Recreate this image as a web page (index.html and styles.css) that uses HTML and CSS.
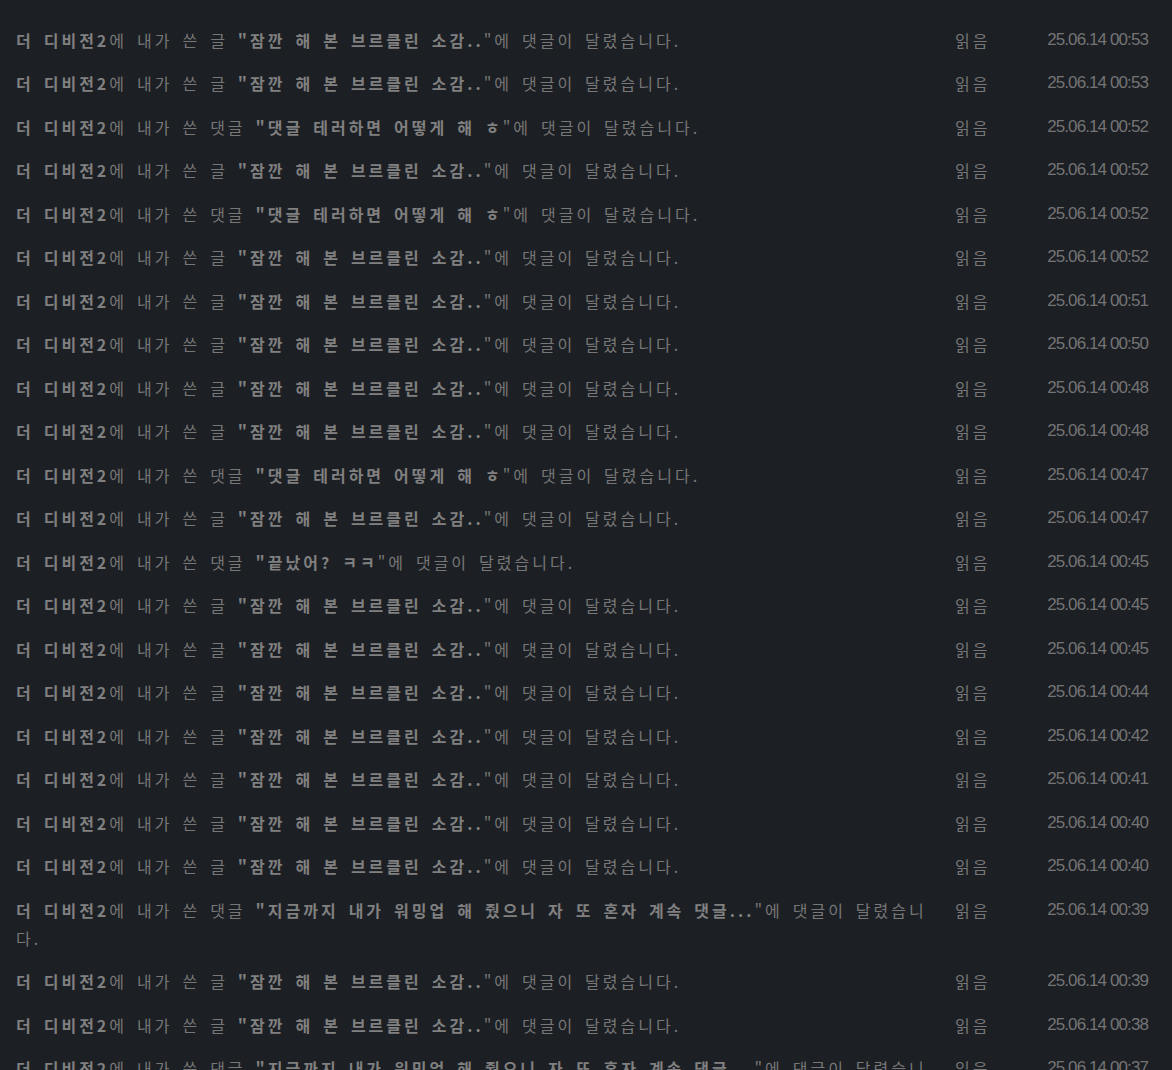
FILE: index.html
```html
<!DOCTYPE html>
<html lang="ko">
<head>
    <meta charset="UTF-8">
    <meta name="viewport" content="width=device-width, initial-scale=1.0">
    <title>알림</title>
    <link rel="stylesheet" href="styles.css">
</head>
<body>
    <ul class="noti-list">
        <li class="noti"><p class="msg"><b>더 디비전2</b>에 내가 쓴 글 <b>"잠깐 해 본 브르클린 소감..</b>"에 댓글이 달렸습니다.</p><span class="state">읽음</span><span class="date">25.06.14 00:53</span></li>
        <li class="noti"><p class="msg"><b>더 디비전2</b>에 내가 쓴 글 <b>"잠깐 해 본 브르클린 소감..</b>"에 댓글이 달렸습니다.</p><span class="state">읽음</span><span class="date">25.06.14 00:53</span></li>
        <li class="noti"><p class="msg"><b>더 디비전2</b>에 내가 쓴 댓글 <b>"댓글 테러하면 어떻게 해 ㅎ</b>"에 댓글이 달렸습니다.</p><span class="state">읽음</span><span class="date">25.06.14 00:52</span></li>
        <li class="noti"><p class="msg"><b>더 디비전2</b>에 내가 쓴 글 <b>"잠깐 해 본 브르클린 소감..</b>"에 댓글이 달렸습니다.</p><span class="state">읽음</span><span class="date">25.06.14 00:52</span></li>
        <li class="noti"><p class="msg"><b>더 디비전2</b>에 내가 쓴 댓글 <b>"댓글 테러하면 어떻게 해 ㅎ</b>"에 댓글이 달렸습니다.</p><span class="state">읽음</span><span class="date">25.06.14 00:52</span></li>
        <li class="noti"><p class="msg"><b>더 디비전2</b>에 내가 쓴 글 <b>"잠깐 해 본 브르클린 소감..</b>"에 댓글이 달렸습니다.</p><span class="state">읽음</span><span class="date">25.06.14 00:52</span></li>
        <li class="noti"><p class="msg"><b>더 디비전2</b>에 내가 쓴 글 <b>"잠깐 해 본 브르클린 소감..</b>"에 댓글이 달렸습니다.</p><span class="state">읽음</span><span class="date">25.06.14 00:51</span></li>
        <li class="noti"><p class="msg"><b>더 디비전2</b>에 내가 쓴 글 <b>"잠깐 해 본 브르클린 소감..</b>"에 댓글이 달렸습니다.</p><span class="state">읽음</span><span class="date">25.06.14 00:50</span></li>
        <li class="noti"><p class="msg"><b>더 디비전2</b>에 내가 쓴 글 <b>"잠깐 해 본 브르클린 소감..</b>"에 댓글이 달렸습니다.</p><span class="state">읽음</span><span class="date">25.06.14 00:48</span></li>
        <li class="noti"><p class="msg"><b>더 디비전2</b>에 내가 쓴 글 <b>"잠깐 해 본 브르클린 소감..</b>"에 댓글이 달렸습니다.</p><span class="state">읽음</span><span class="date">25.06.14 00:48</span></li>
        <li class="noti"><p class="msg"><b>더 디비전2</b>에 내가 쓴 댓글 <b>"댓글 테러하면 어떻게 해 ㅎ</b>"에 댓글이 달렸습니다.</p><span class="state">읽음</span><span class="date">25.06.14 00:47</span></li>
        <li class="noti"><p class="msg"><b>더 디비전2</b>에 내가 쓴 글 <b>"잠깐 해 본 브르클린 소감..</b>"에 댓글이 달렸습니다.</p><span class="state">읽음</span><span class="date">25.06.14 00:47</span></li>
        <li class="noti"><p class="msg"><b>더 디비전2</b>에 내가 쓴 댓글 <b>"끝났어? ㅋㅋ</b>"에 댓글이 달렸습니다.</p><span class="state">읽음</span><span class="date">25.06.14 00:45</span></li>
        <li class="noti"><p class="msg"><b>더 디비전2</b>에 내가 쓴 글 <b>"잠깐 해 본 브르클린 소감..</b>"에 댓글이 달렸습니다.</p><span class="state">읽음</span><span class="date">25.06.14 00:45</span></li>
        <li class="noti"><p class="msg"><b>더 디비전2</b>에 내가 쓴 글 <b>"잠깐 해 본 브르클린 소감..</b>"에 댓글이 달렸습니다.</p><span class="state">읽음</span><span class="date">25.06.14 00:45</span></li>
        <li class="noti"><p class="msg"><b>더 디비전2</b>에 내가 쓴 글 <b>"잠깐 해 본 브르클린 소감..</b>"에 댓글이 달렸습니다.</p><span class="state">읽음</span><span class="date">25.06.14 00:44</span></li>
        <li class="noti"><p class="msg"><b>더 디비전2</b>에 내가 쓴 글 <b>"잠깐 해 본 브르클린 소감..</b>"에 댓글이 달렸습니다.</p><span class="state">읽음</span><span class="date">25.06.14 00:42</span></li>
        <li class="noti"><p class="msg"><b>더 디비전2</b>에 내가 쓴 글 <b>"잠깐 해 본 브르클린 소감..</b>"에 댓글이 달렸습니다.</p><span class="state">읽음</span><span class="date">25.06.14 00:41</span></li>
        <li class="noti"><p class="msg"><b>더 디비전2</b>에 내가 쓴 글 <b>"잠깐 해 본 브르클린 소감..</b>"에 댓글이 달렸습니다.</p><span class="state">읽음</span><span class="date">25.06.14 00:40</span></li>
        <li class="noti"><p class="msg"><b>더 디비전2</b>에 내가 쓴 글 <b>"잠깐 해 본 브르클린 소감..</b>"에 댓글이 달렸습니다.</p><span class="state">읽음</span><span class="date">25.06.14 00:40</span></li>
        <li class="noti"><p class="msg"><b>더 디비전2</b>에 내가 쓴 댓글 <b>"지금까지 내가 워밍업 해 줬으니 자 또 혼자 계속 댓글...</b>"에 댓글이 달렸습니다.</p><span class="state">읽음</span><span class="date">25.06.14 00:39</span></li>
        <li class="noti"><p class="msg"><b>더 디비전2</b>에 내가 쓴 글 <b>"잠깐 해 본 브르클린 소감..</b>"에 댓글이 달렸습니다.</p><span class="state">읽음</span><span class="date">25.06.14 00:39</span></li>
        <li class="noti"><p class="msg"><b>더 디비전2</b>에 내가 쓴 글 <b>"잠깐 해 본 브르클린 소감..</b>"에 댓글이 달렸습니다.</p><span class="state">읽음</span><span class="date">25.06.14 00:38</span></li>
        <li class="noti"><p class="msg"><b>더 디비전2</b>에 내가 쓴 댓글 <b>"지금까지 내가 워밍업 해 줬으니 자 또 혼자 계속 댓글...</b>"에 댓글이 달렸습니다.</p><span class="state">읽음</span><span class="date">25.06.14 00:37</span></li>
    </ul>
</body>
</html>
```
FILE: styles.css
```css
body {
    margin: 0;
    background-color: #1c1f24;
    font-family: "Noto Sans CJK KR", "Noto Sans", sans-serif;
}

.noti-list {
    list-style: none;
    margin: 0;
    padding: 18px 24px 0 16px;
}

.noti {
    display: grid;
    grid-template-columns: 1fr 70px 107px;
    column-gap: 16px;
    padding: 7.75px 0;
    line-height: 28px;
}

.msg {
    margin: 0;
    color: #777777;
    font-size: 16px;
    letter-spacing: 3px;
    word-spacing: 2.5px;
}
.msg b {
    color: #808080;
    font-weight: 700;
}

.state {
    color: #777777;
    font-size: 16px;
    letter-spacing: 3px;
}

.date {
    color: #747474;
    font-family: "Liberation Sans", sans-serif;
    font-size: 17px;
    letter-spacing: -0.9px;
    text-align: right;
    white-space: nowrap;
}
```
